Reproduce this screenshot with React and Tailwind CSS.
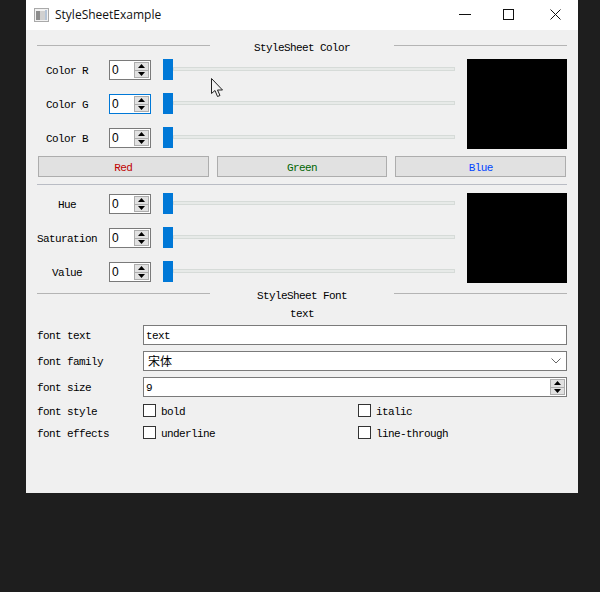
const mono = "font-['Liberation_Mono','Noto_Sans_CJK_SC',monospace] text-[11px] tracking-[-0.6px] text-black";

function SpinButtons() {
  return (
    <div className="flex w-[15px] flex-col border border-[#adadad] bg-[#e1e1e1]">
      <div className="flex flex-1 items-center justify-center border-b border-[#adadad]">
        <svg width="7" height="4" viewBox="0 0 7 4"><path d="M3.5 0 7 4H0z" fill="#000" /></svg>
      </div>
      <div className="flex flex-1 items-center justify-center">
        <svg width="7" height="4" viewBox="0 0 7 4"><path d="M0 0h7L3.5 4z" fill="#000" /></svg>
      </div>
    </div>
  );
}

function SpinBox({ focused }) {
  return (
    <div className={`flex h-5 w-[42px] items-stretch justify-between border bg-white py-px pr-px pl-[2px] ${focused ? "border-[#0078d7]" : "border-[#7a7a7a]"}`}>
      <span className="font-['Liberation_Sans',sans-serif] text-[12px] leading-[17px] text-black">0</span>
      <SpinButtons />
    </div>
  );
}

function SliderRow({ label, focused }) {
  return (
    <div className="flex h-[22px] items-start">
      <div className={`w-[60px] text-center leading-[24px] ${mono}`}>{label}</div>
      <div className="ml-3 mt-px"><SpinBox focused={focused} /></div>
      <div className="ml-3 flex w-[292px] items-start">
        <div className="h-[21px] w-2.5 bg-[#0078d7]" />
        <div className="mt-2 h-1 flex-1 border border-[#d6dbd8] bg-[#e7eae8]" />
      </div>
    </div>
  );
}

function SliderGroup({ rows }) {
  return (
    <div className="flex justify-between">
      <div className="flex flex-col gap-3">
        {rows.map((r) => <SliderRow key={r.label} label={r.label} focused={r.focused} />)}
      </div>
      <div className="h-[90px] w-[100px] bg-black" />
    </div>
  );
}

function GroupTitle({ title }) {
  return (
    <div className="flex h-4 items-start">
      <div className="mt-[7px] h-px w-[173px] bg-[#b4b4b4]" />
      <div className={`flex-1 text-center leading-[20px] ${mono}`}>{title}</div>
      <div className="mt-[7px] h-px w-[173px] bg-[#b4b4b4]" />
    </div>
  );
}

function ColorButton({ label, color }) {
  return (
    <button className={`h-[21px] flex-1 border border-[#adadad] bg-[#e1e1e1] pt-1 text-center leading-[15px] ${mono} ${color}`}>
      {label}
    </button>
  );
}

function FormRow({ label, children }) {
  return (
    <div className="flex h-5 items-center">
      <div className={`w-[106px] pt-0.5 ${mono}`}>{label}</div>
      <div className="h-5 flex-1">{children}</div>
    </div>
  );
}

function Check({ label }) {
  return (
    <div className="flex h-[13px] w-[215px] shrink-0 items-center">
      <div className="h-[13px] w-[13px] shrink-0 border border-[#333] bg-white" />
      <span className={`ml-[5px] pt-[3px] ${mono}`}>{label}</span>
    </div>
  );
}

export default function App() {
  return (
    <div className="relative h-[592px] w-[600px] overflow-hidden bg-[#1e1e1e] pl-[26px]">
      <div className="flex h-[493px] w-[552px] flex-col bg-[#f0f0f0]">
        {/* title bar */}
        <div className="flex h-[30px] items-center bg-white">
          <svg className="ml-2" width="15" height="14" viewBox="0 0 15 14">
            <rect x="0.5" y="0.5" width="14" height="13" fill="#f2f2f2" stroke="#a9a9a9" />
            <rect x="2" y="3" width="4" height="9" fill="#8c8c8c" />
            <rect x="6" y="3" width="5" height="9" fill="#d0d0d0" />
            <rect x="11" y="2" width="2" height="10" fill="#b5c4d6" />
          </svg>
          <span className="ml-1.5 font-['Open_Sans',sans-serif] text-[12px] text-[#111]">StyleSheetExample</span>
          <div className="mb-0.5 ml-auto flex items-center">
            <svg width="12" height="12" viewBox="0 0 12 12" className="mr-[32px]"><path d="M0 6.5h12" stroke="#111" fill="none" /></svg>
            <svg width="11" height="11" viewBox="0 0 11 11" className="mr-[36px]"><rect x="0.5" y="0.5" width="10" height="10" stroke="#111" fill="none" /></svg>
            <svg width="11" height="11" viewBox="0 0 11 11" className="mr-[17px]"><path d="M0.5 0.5l10 10M10.5 0.5l-10 10" stroke="#111" fill="none" /></svg>
          </div>
        </div>

        <div className="flex flex-col px-[11px]">
          <div className="mt-[8px]"><GroupTitle title="StyleSheet Color" /></div>
          <div className="mt-[5px]">
            <SliderGroup rows={[{ label: "Color R" }, { label: "Color G", focused: true }, { label: "Color B" }]} />
          </div>
          <div className="mt-[7px] flex gap-2 px-px">
            <ColorButton label="Red" color="!text-[#c00000]" />
            <ColorButton label="Green" color="!text-[#006400]" />
            <ColorButton label="Blue" color="!text-[#0044ff]" />
          </div>
          <div className="mt-[7px] h-px bg-[#b9bcc4]" />
          <div className="mt-2">
            <SliderGroup rows={[{ label: "Hue" }, { label: "Saturation" }, { label: "Value" }]} />
          </div>
          <div className="mt-[3px]"><GroupTitle title="StyleSheet Font" /></div>
          <div className={`mt-[3px] h-4 text-center leading-[18px] ${mono}`}>text</div>

          <div className="mt-[4px] flex flex-col gap-1.5">
            <FormRow label="font text">
              <div className={`h-5 overflow-hidden border border-[#7a7a7a] bg-white pl-[2px] leading-[20px] ${mono}`}>text</div>
            </FormRow>
            <FormRow label="font family">
              <div className="flex h-5 items-center justify-between border border-[#7a7a7a] bg-white pl-1 pr-[5px]">
                <span className="font-['Noto_Sans_CJK_SC',sans-serif] text-[12px] leading-[18px] text-black">宋体</span>
                <svg width="10" height="6" viewBox="0 0 10 6"><path d="M0.5 0.5 5 5l4.5-4.5" stroke="#666" fill="none" /></svg>
              </div>
            </FormRow>
            <FormRow label="font size">
              <div className="flex h-5 justify-between border border-[#7a7a7a] bg-white py-px pr-px pl-[2px]">
                <span className={`leading-[19px] ${mono}`}>9</span>
                <SpinButtons />
              </div>
            </FormRow>
          </div>

          <div className="mt-[7px] flex flex-col gap-[9px]">
            <div className="flex h-[13px] items-center">
              <div className={`w-[106px] shrink-0 pt-[3px] ${mono}`}>font style</div>
              <Check label="bold" />
              <Check label="italic" />
            </div>
            <div className="flex h-[13px] items-center">
              <div className={`w-[106px] shrink-0 pt-[3px] ${mono}`}>font effects</div>
              <Check label="underline" />
              <Check label="line-through" />
            </div>
          </div>
        </div>
      </div>

      {/* mouse cursor */}
      <svg className="absolute left-[211px] top-[78px]" width="13" height="20" viewBox="0 0 13 20">
        <path d="M0.5 0.5v15l3.5-3 2.5 6 2.5-1-2.5-5.5h5z" fill="#f4f4f4" stroke="#222" />
      </svg>
    </div>
  );
}
